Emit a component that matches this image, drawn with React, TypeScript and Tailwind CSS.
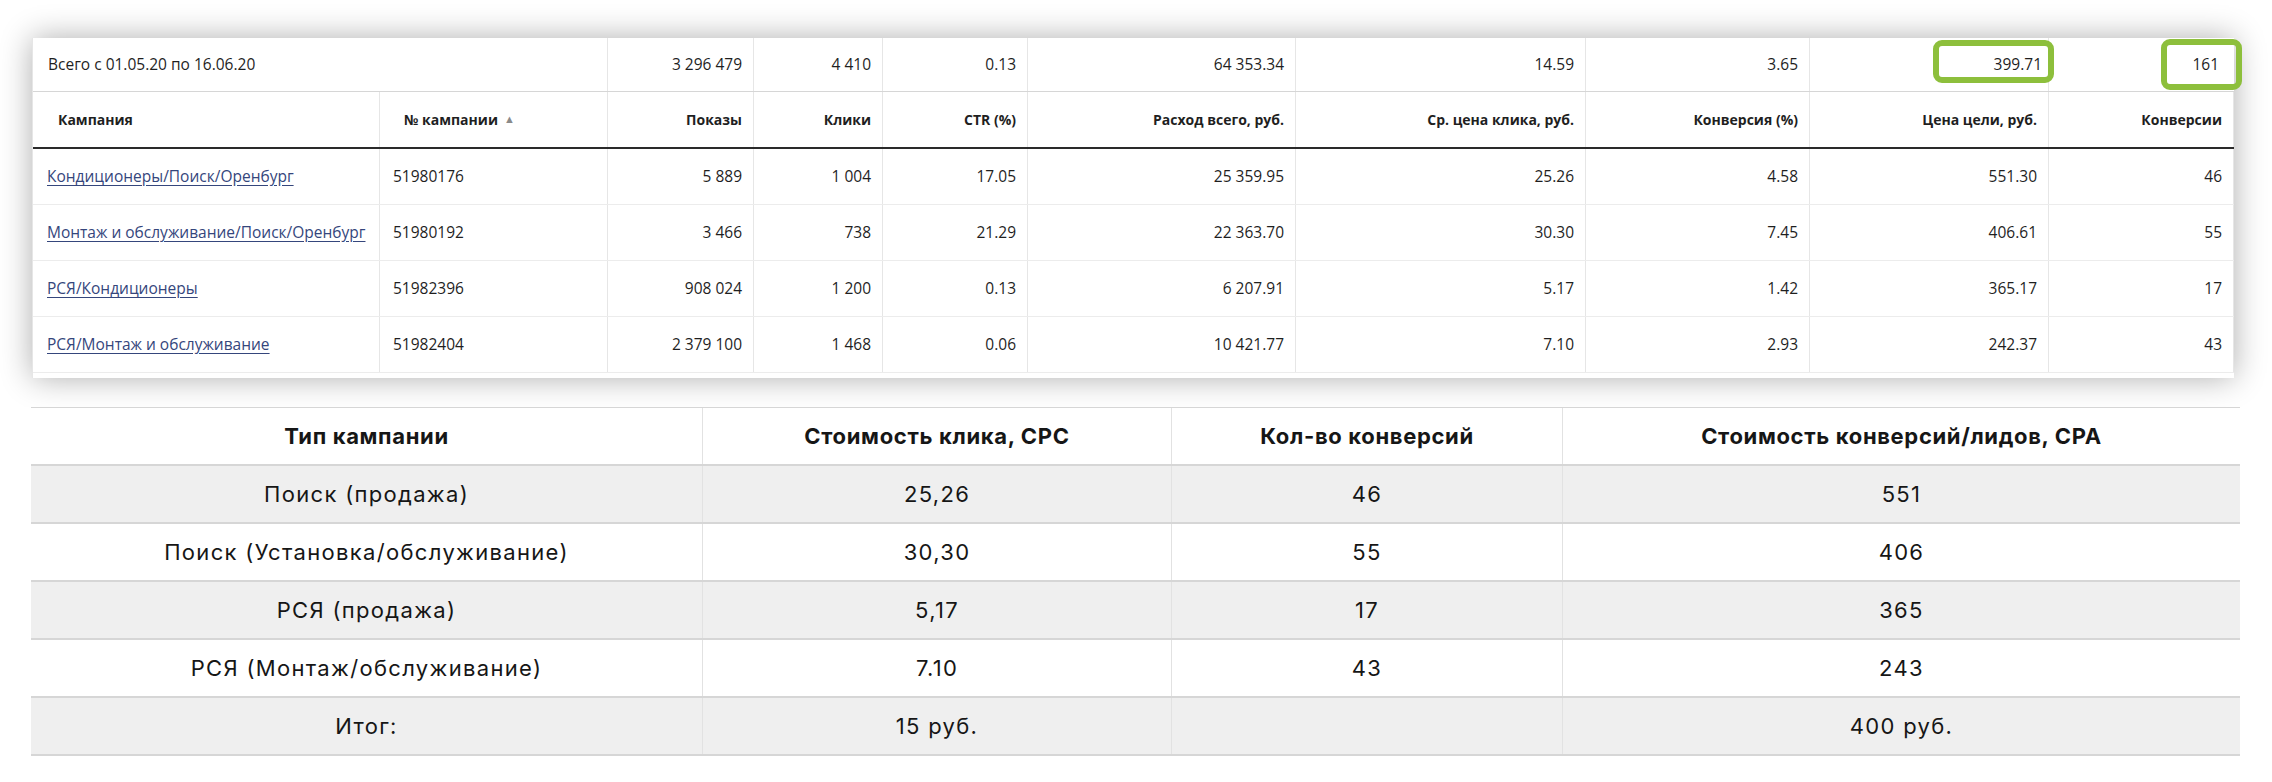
import React from "react";

const cols =
  "grid grid-cols-[347px_228px_146px_129px_145px_268px_290px_224px_239px_185px]";

const campaigns = [
  {
    name: "Кондиционеры/Поиск/Оренбург",
    id: "51980176",
    values: ["5 889", "1 004", "17.05", "25 359.95", "25.26", "4.58", "551.30", "46"],
  },
  {
    name: "Монтаж и обслуживание/Поиск/Оренбург",
    id: "51980192",
    values: ["3 466", "738", "21.29", "22 363.70", "30.30", "7.45", "406.61", "55"],
  },
  {
    name: "РСЯ/Кондиционеры",
    id: "51982396",
    values: ["908 024", "1 200", "0.13", "6 207.91", "5.17", "1.42", "365.17", "17"],
  },
  {
    name: "РСЯ/Монтаж и обслуживание",
    id: "51982404",
    values: ["2 379 100", "1 468", "0.06", "10 421.77", "7.10", "2.93", "242.37", "43"],
  },
];

const headers = [
  "Показы",
  "Клики",
  "CTR (%)",
  "Расход всего, руб.",
  "Ср. цена клика, руб.",
  "Конверсия (%)",
  "Цена цели, руб.",
  "Конверсии",
];

const summary = [
  ["Поиск (продажа)", "25,26", "46", "551"],
  ["Поиск (Установка/обслуживание)", "30,30", "55", "406"],
  ["РСЯ (продажа)", "5,17", "17", "365"],
  ["РСЯ (Монтаж/обслуживание)", "7.10", "43", "243"],
  ["Итог:", "15 руб.", "", "400 руб."],
];

const Num = ({ children }: { children: React.ReactNode }) => (
  <div className="flex items-center justify-end pr-[11px] border-r border-[#e6e6e6]">
    {children}
  </div>
);

export default function App() {
  return (
    <div className="w-[2272px] h-[782px] bg-white pt-[38px] pl-[32px] overflow-hidden">
      {/* DIRECT REPORT */}
      <div
        className="
          w-[2202px]
          bg-white
          border-l
          border-[#e6e6e6]
          pb-[5px]
          shadow-[0_0_30px_rgba(0,0,0,0.32)]
          text-[15.5px]
          text-[#1f1f1f]
          font-['Open_Sans',sans-serif]
        "
      >
        {/* TOTAL ROW */}
        <div className={`${cols} h-[54px] border-b border-[#d6d6d6]`}>
          <div className="col-span-2 flex items-center pl-[15px] border-r border-[#e6e6e6]">
            Всего с 01.05.20 по 16.06.20
          </div>
          <Num>3 296 479</Num>
          <Num>4 410</Num>
          <Num>0.13</Num>
          <Num>64 353.34</Num>
          <Num>14.59</Num>
          <Num>3.65</Num>
          <div className="relative flex items-center justify-end pr-[6px] border-r border-[#e6e6e6]">
            <span className="relative z-10">399.71</span>
            <div className="absolute left-[123px] top-[2px] w-[121px] h-[43px] border-[6px] border-[#8dbf3c] rounded-[9px]" />
          </div>
          <div className="relative flex items-center justify-end pr-[15px]">
            <span className="relative z-10">161</span>
            <div className="absolute left-[112px] top-[1px] w-[81px] h-[51px] border-[6px] border-[#8dbf3c] rounded-[9px]" />
          </div>
        </div>

        {/* HEADER */}
        <div className={`${cols} h-[57px] border-b-2 border-[#2a2a2a] font-bold text-[14px]`}>
          <div className="flex items-center pl-[25px] border-r border-[#e6e6e6]">
            Кампания
          </div>
          <div className="flex items-center pl-[24px] border-r border-[#e6e6e6]">
            № кампании
            <span className="ml-[6px] text-[11px] text-[#8a8a8a]">▲</span>
          </div>
          {headers.map((h) => (
            <Num key={h}>{h}</Num>
          ))}
        </div>

        {/* CAMPAIGNS */}
        {campaigns.map((c) => (
          <div key={c.id} className={`${cols} h-[56px] border-b border-[#ececec]`}>
            <div className="flex items-center pl-[14px] border-r border-[#e6e6e6]">
              <a
                href="#"
                className="text-[#35467c] underline underline-offset-[3px] decoration-[#35467c]"
              >
                {c.name}
              </a>
            </div>
            <div className="flex items-center pl-[13px] border-r border-[#e6e6e6]">
              {c.id}
            </div>
            {c.values.map((v, i) => (
              <Num key={i}>{v}</Num>
            ))}
          </div>
        ))}
      </div>

      {/* SUMMARY TABLE */}
      <div
        className="
          mt-[29px]
          -ml-px
          w-[2209px]
          border-t
          border-[#d6d6d6]
          text-[22px]
          text-[#161616]
          tracking-[0.06em]
          font-['Inter',sans-serif]
        "
      >
        <div className="grid grid-cols-[672px_469px_391px_677px] h-[58px] border-b-2 border-[#d6d6d6] font-bold tracking-[0.03em] bg-white">
          {["Тип кампании", "Стоимость клика, CPC", "Кол-во конверсий", "Стоимость конверсий/лидов, CPA"].map(
            (h, i) => (
              <div
                key={h}
                className={`flex items-center justify-center ${i < 3 ? "border-r border-[#e2e2e2]" : ""}`}
              >
                {h}
              </div>
            ),
          )}
        </div>

        {summary.map((row, r) => (
          <div
            key={r}
            className={`grid grid-cols-[672px_469px_391px_677px] h-[58px] border-b-2 border-[#d6d6d6] ${
              r % 2 === 0 ? "bg-[#efefef]" : "bg-white"
            }`}
          >
            {row.map((cell, i) => (
              <div
                key={i}
                className={`flex items-center justify-center ${i < 3 ? "border-r border-[#e2e2e2]" : ""}`}
              >
                {cell}
              </div>
            ))}
          </div>
        ))}
      </div>
    </div>
  );
}
